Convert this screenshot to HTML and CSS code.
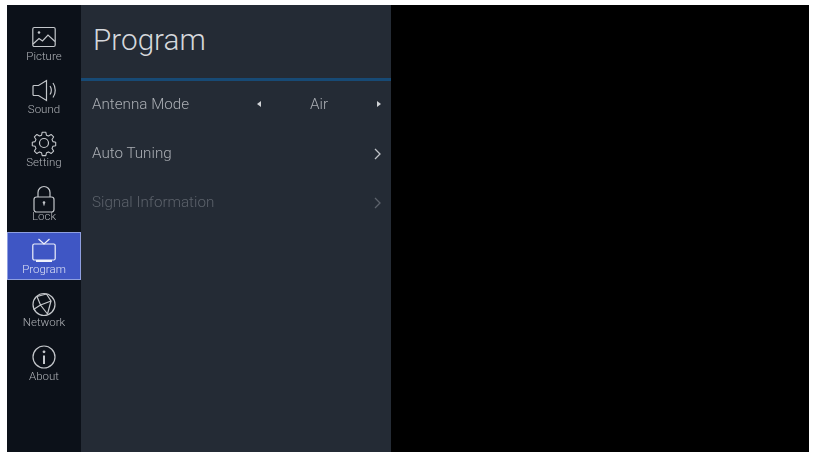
FILE: index.html
```html
<!DOCTYPE html>
<html lang="en">
<head>
    <meta charset="UTF-8">
    <title>Program</title>
    <link rel="stylesheet" href="styles.css">
</head>
<body>
    <div class="screen">
        <nav class="sidebar">
            <div class="nav-item">
                <svg class="nav-icon" viewBox="0 0 24 24">
                    <rect x="0.800" y="2.500" width="22.400" height="19" rx="1.500"/>
                    <circle cx="7" cy="7.500" r="1.300" class="solid"/>
                    <path d="M1 19l6-5.500 3.500 2.500 5.500-6 7 6.500"/>
                </svg>
                <span>Picture</span>
            </div>
            <div class="nav-item">
                <svg class="nav-icon" viewBox="0 0 24 24">
                    <path d="M1 8.500a1 1 0 0 1 1-1h4.500l8-5v20l-8-5H2a1 1 0 0 1-1-1z"/>
                    <path d="M18 8c1.600 2.500 1.600 6 0 8.500"/>
                    <path d="M21 5c3 4 3 10.500 0 14.500"/>
                </svg>
                <span>Sound</span>
            </div>
            <div class="nav-item">
                <svg class="nav-icon" viewBox="0 0 24 24">
                    <path d="M10 0h4l.7 3.300 2.300 1 2.900-1.800 2.800 2.800-1.800 2.900 1 2.300 3.100.7v3.800l-3.100.7-1 2.300 1.800 2.900-2.800 2.800-2.900-1.800-2.300 1-.7 3.100h-4l-.7-3.100-2.300-1-2.900 1.800-2.800-2.800 1.800-2.900-1-2.300-3.100-.7v-3.800l3.100-.7 1-2.300-1.800-2.900 2.800-2.800 2.900 1.800 2.300-1z" stroke-linejoin="round" transform="translate(1.200 1.200) scale(.9)"/>
                    <circle cx="12" cy="12" r="4.500"/>
                </svg>
                <span>Setting</span>
            </div>
            <div class="nav-item">
                <svg class="nav-icon" viewBox="0 0 24 24">
                    <path d="M6 12V7.500a6 6 0 0 1 12 0V12"/>
                    <rect x="2" y="12" width="20" height="15" rx="2.500"/>
                    <circle cx="12" cy="17.500" r="1.300" class="solid"/>
                    <path d="M12 17.500v3"/>
                </svg>
                <span>Lock</span>
            </div>
            <div class="nav-item active">
                <svg class="nav-icon" viewBox="0 0 24 24">
                    <path d="M6.500 1l5.500 5 5.500-5"/>
                    <rect x="0.800" y="6" width="22.400" height="16" rx="1.500"/>
                    <path d="M4 23h16" class="thick"/>
                </svg>
                <span>Program</span>
            </div>
            <div class="nav-item">
                <svg class="nav-icon" viewBox="0 -1.500 24 24">
                    <circle cx="12" cy="12" r="11"/>
                    <path d="M5 4l3.500 8.500L19 8.500 14.500 1.500M8.500 12.500l7 9M19 8.500l-3.500 13M5 4l9.500-2.500M8.500 12.500L1.500 17"/>
                </svg>
                <span>Network</span>
            </div>
            <div class="nav-item">
                <svg class="nav-icon" viewBox="0 0 24 24">
                    <circle cx="12" cy="12" r="11"/>
                    <circle cx="12" cy="6.800" r="1.400" class="solid"/>
                    <path d="M12 10.500v8.500" class="thick"/>
                </svg>
                <span>About</span>
            </div>
        </nav>
        <main class="panel">
            <h1 class="panel-title">Program</h1>
            <div class="rows">
                <div class="row">
                    <span>Antenna Mode</span>
                    <div class="selector">
                        <span class="tri tri-left"></span>
                        <span>Air</span>
                        <span class="tri tri-right"></span>
                    </div>
                </div>
                <div class="row">
                    <span>Auto Tuning</span>
                    <svg class="chevron" viewBox="0 0 7 12"><path d="M1 1l5 5-5 5"/></svg>
                </div>
                <div class="row disabled">
                    <span>Signal Information</span>
                    <svg class="chevron" viewBox="0 0 7 12"><path d="M1 1l5 5-5 5"/></svg>
                </div>
            </div>
        </main>
    </div>
</body>
</html>
```

FILE: styles.css
```css
* {
    box-sizing: border-box;
}
body {
    margin: 0;
    background-color: #fff;
    font-family: Roboto, Arial, sans-serif;
}
.screen {
    display: flex;
    width: 802px;
    height: 447px;
    margin: 5px 0 0 7px;
    background-color: #000;
}
.sidebar {
    display: flex;
    flex-direction: column;
    gap: 5.33px;
    width: 74px;
    padding-top: 13.7px;
    background-color: #0c1119;
}
.nav-item {
    display: flex;
    flex-direction: column;
    align-items: center;
    height: 48px;
    padding-top: 6px;
    color: #aeb1b6;
    font-size: 11.5px;
    font-weight: 300;
    line-height: 13px;
}
.nav-item span {
    margin-top: 1px;
    filter: blur(0.3px);
}
.nav-item.active {
    background-color: #3f56c4;
    border: 1px solid #8f9fe0;
    padding-top: 5px;
    color: #dde1f5;
}
.nav-icon {
    width: 24px;
    height: 24px;
    flex-shrink: 0;
    overflow: visible;
    fill: none;
    stroke: #c4c7cb;
    stroke-width: 1.2;
    filter: blur(0.3px);
}
.nav-icon .solid {
    fill: #c4c7cb;
    stroke: none;
}
.nav-icon .thick {
    stroke-width: 2;
}
.active .nav-icon {
    stroke: #f0f2fb;
}
.panel {
    width: 310px;
    background-color: #242b35;
}
.panel-title {
    height: 76px;
    margin: 0;
    padding: 16px 0 0 12px;
    border-bottom: 3px solid #174a75;
    color: #d5d8dc;
    font-size: 29.700px;
    font-weight: 300;
    line-height: 38px;
}
.rows {
    display: flex;
    flex-direction: column;
    gap: 5px;
    padding-top: 1px;
}
.row {
    display: flex;
    align-items: center;
    justify-content: space-between;
    height: 44px;
    padding: 0 10px 0 11px;
    color: #aaaeb4;
    font-size: 15.200px;
    font-weight: 300;
}
.row > span,
.selector > span:not(.tri) {
    filter: blur(0.3px);
}
.row.disabled {
    color: #5c626b;
}
.selector {
    display: flex;
    align-items: center;
    justify-content: space-between;
    width: 124px;
}
.tri {
    width: 0;
    height: 0;
    border-top: 3px solid transparent;
    border-bottom: 3px solid transparent;
}
.tri-left {
    border-right: 4.500px solid #d0d3d6;
}
.tri-right {
    border-left: 4.500px solid #d0d3d6;
}
.chevron {
    width: 7px;
    height: 12px;
    margin-top: 2px;
    fill: none;
    stroke: #c0c3c8;
    stroke-width: 1.300;
}
.disabled .chevron {
    stroke: #5c626b;
}
```
